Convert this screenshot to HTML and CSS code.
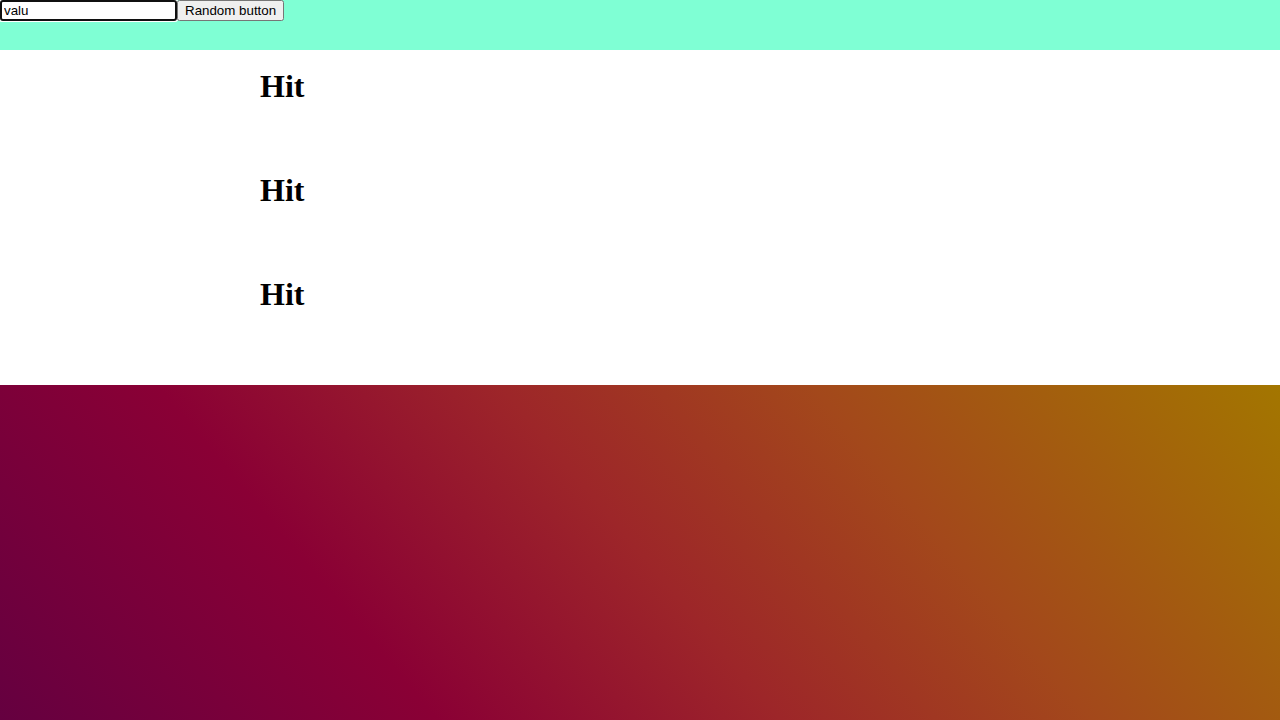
FILE: index.html
```html
<!DOCTYPE html>
<html>
<head>
<meta charset="utf-8">
<link rel="stylesheet" href="styles.css">
</head>
<body>
<header class="top"><input class="field" type="text" value="valu" autofocus><button class="btn">Random button</button></header>
<main class="hits">
<h1 class="hit">Hit</h1>
<h1 class="hit">Hit</h1>
<h1 class="hit">Hit</h1>
</main>
<section class="glow"></section>
</body>
</html>
```
FILE: styles.css
```css
html, body {
  margin: 0;
  padding: 0;
}
body {
  width: 1280px;
  height: 720px;
  overflow: hidden;
  display: flex;
  flex-direction: column;
  background: #ffffff;
}
.top {
  height: 50px;
  flex: 0 0 50px;
  background: #7fffd4;
  display: block;
  line-height: 0;
}
.field, .btn {
  font-family: "Liberation Sans", Arial, sans-serif;
  font-size: 13.333px;
  vertical-align: top;
  margin: 0;
}
.field {
  width: 177px;
  height: 21px;
  box-sizing: border-box;
}
.btn {
  height: 21px;
  box-sizing: border-box;
}
.hits {
  flex: 0 0 335px;
  height: 335px;
  box-sizing: border-box;
  padding: 18px 0 0 260px;
  background: #ffffff;
}
.hit {
  font-family: "Liberation Serif", "Times New Roman", serif;
  font-size: 32px;
  font-weight: bold;
  margin: 0 0 67px 0;
  color: #000;
}
.glow {
  flex: 1 1 auto;
  background: linear-gradient(50deg, #650040 0%, #8a0035 28%, #9d2629 50%, #a3481b 70%, #a37600 100%);
}
```
